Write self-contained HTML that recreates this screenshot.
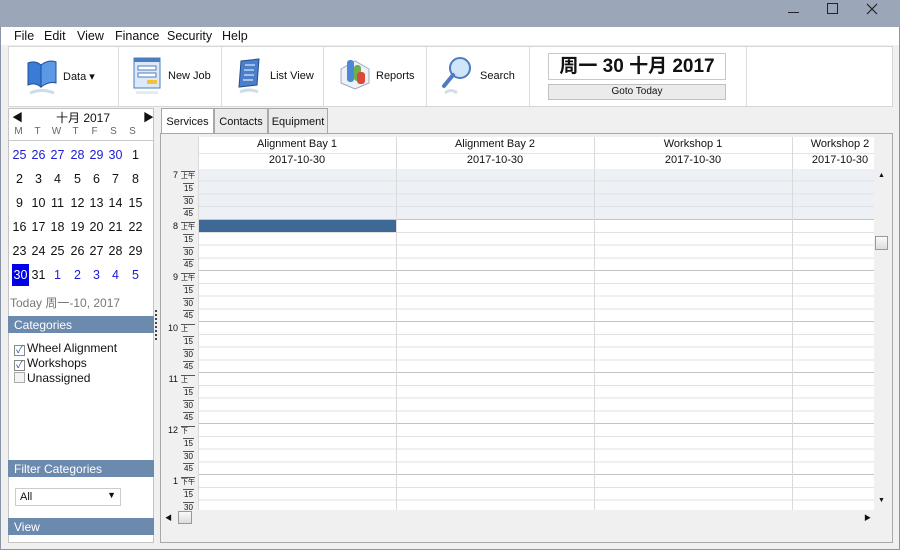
<!DOCTYPE html>
<html><head><meta charset="utf-8"><style>
*{margin:0;padding:0;box-sizing:border-box}
body{width:900px;height:550px;overflow:hidden;background:#f0f0f0;font-family:"Liberation Sans","Noto Sans CJK SC",sans-serif;font-size:12px;color:#111;position:relative}
.a{position:absolute}
#title{left:0;top:0;width:900px;height:27px;background:#9ba6b9}
#frame{left:0;top:27px;width:900px;height:523px;border:1px solid #8a94a6;border-top:none;background:#f0f0f0}
#menu{left:1px;top:27px;width:898px;height:18px;background:#fff}
#menu span{position:absolute;top:2px;font-size:12.5px}
#tb{left:8px;top:46px;width:885px;height:61px;background:#fff;border:1px solid #d6d6d6}
.sep{top:0;width:1px;height:59px;background:#dcdcdc}
.tl{font-size:11px;top:23px}
.hd{background:#6b8aae;color:#fff;font-size:12px;padding:2px 6px;height:17px}
.cal span{position:absolute;width:19px;text-align:center;font-size:12.5px}
.b{color:#1c1cd6}
.tab{top:108px;height:26px;border:1px solid #a8a8a8;border-bottom:none;background:#ebebeb;font-size:11px;text-align:center;line-height:26px}
.ml{left:183px;font-size:8px;border-top:1px solid #555;width:11px;text-align:center;line-height:9px}
.hl{left:168px;font-size:9px;width:10px;text-align:right}
.am{left:181px;font-size:7px;border-top:1px solid #555;width:14px;line-height:9px}
.cb{display:inline-block;width:11px;height:11px;border:1px solid #888;background:#fff;vertical-align:-1px;margin-right:2px;font-size:10px;line-height:9px;text-align:center;color:#2a4f9a}
</style></head><body>
<div class="a" id="title"></div>
<div class="a" style="left:788px;top:12px;width:11px;height:1px;background:#222"></div>
<div class="a" style="left:827px;top:3px;width:11px;height:11px;border:1px solid #222"></div>
<svg class="a" style="left:866px;top:3px" width="12" height="12"><path d="M1 1L11 11M11 1L1 11" stroke="#222" stroke-width="1.2"/></svg>
<div class="a" id="frame"></div>
<div class="a" id="menu">
<span style="left:13px">File</span><span style="left:43px">Edit</span><span style="left:76px">View</span><span style="left:114px">Finance</span><span style="left:166px">Security</span><span style="left:221px">Help</span></div>
<div class="a" id="tb">
<div class="a sep" style="left:109px"></div><div class="a sep" style="left:212px"></div><div class="a sep" style="left:314px"></div><div class="a sep" style="left:417px"></div><div class="a sep" style="left:520px"></div><div class="a sep" style="left:737px"></div>
<svg class="a" style="left:16px;top:10px" width="34" height="40"><path d="M3 6 Q10 3 16 8 L16 30 Q10 25 3 28Z" fill="#3a7bd5" stroke="#1e4f99"/><path d="M16 8 Q24 2 31 5 L31 26 Q24 24 16 30Z" fill="#5b98e6" stroke="#1e4f99"/><path d="M5 36 Q17 31 29 36" stroke="#cfdbe8" stroke-width="3" fill="none"/></svg>
<div class="a tl" style="left:54px">Data ▾</div>
<svg class="a" style="left:124px;top:10px" width="28" height="40"><rect x="1" y="1" width="26" height="30" fill="#dbe9f8" stroke="#4d7cc0"/><rect x="1" y="1" width="26" height="4" fill="#4d7cc0"/><rect x="5" y="9" width="18" height="4" fill="#fff" stroke="#4d7cc0"/><rect x="5" y="16" width="18" height="4" fill="#fff" stroke="#4d7cc0"/><rect x="14" y="23" width="10" height="4" fill="#f3c13a"/><rect x="3" y="34" width="22" height="3" fill="#e3ebf5"/></svg>
<div class="a tl" style="left:159px">New Job</div>
<svg class="a" style="left:226px;top:10px" width="28" height="40"><path d="M6 4 L24 2 L22 28 L4 30Z" fill="#4a7fcc" stroke="#234f8f"/><path d="M10 8h10M9 13h10M9 18h10M8 23h10" stroke="#fff"/><path d="M5 35 Q14 31 23 35" stroke="#cfdbe8" stroke-width="3" fill="none"/></svg>
<div class="a tl" style="left:261px">List View</div>
<svg class="a" style="left:330px;top:8px" width="32" height="42"><path d="M2 14 L16 6 L30 14 L30 28 L16 34 L2 28Z" fill="#eef2f8" stroke="#9aaac0"/><rect x="8" y="5" width="7" height="22" rx="3" fill="#4d88d8"/><rect x="15" y="10" width="7" height="16" rx="3" fill="#6ab04c"/><rect x="18" y="17" width="8" height="12" rx="3" fill="#d94a3a"/></svg>
<div class="a tl" style="left:367px">Reports</div>
<svg class="a" style="left:432px;top:8px" width="32" height="42"><circle cx="19" cy="13" r="10" fill="#cfe5f8" stroke="#4d7cc0" stroke-width="2"/><path d="M12 20 L3 31" stroke="#4d7cc0" stroke-width="4" stroke-linecap="round"/><path d="M4 38 Q10 33 16 38" stroke="#d5dde8" stroke-width="3" fill="none"/></svg>
<div class="a tl" style="left:471px">Search</div>
<div class="a" style="left:539px;top:6px;width:178px;height:27px;border:1px solid #c8c8c8;font-size:19px;font-weight:bold;text-align:center;line-height:25px">周一 30 十月 2017</div>
<div class="a" style="left:539px;top:37px;width:178px;height:16px;border:1px solid #c0c0c0;background:#ebebeb;font-size:10px;text-align:center;line-height:14px">Goto Today</div>
</div>
<!-- left panel -->
<div class="a" style="left:8px;top:108px;width:146px;height:435px;background:#fff;border:1px solid #c4c4c4"></div>
<div class="a" style="left:12px;top:109px;font-size:11px">◀</div>
<div class="a" style="left:143px;top:109px;font-size:11px">▶</div>
<div class="a" style="left:56px;top:109px;font-size:12px">十月 2017</div>
<div class="a cal" style="left:8px;top:126px;width:146px;height:14px;color:#666">
<span style="left:1px;font-size:10px">M</span><span style="left:20px;font-size:10px">T</span><span style="left:39px;font-size:10px">W</span><span style="left:58px;font-size:10px">T</span><span style="left:77px;font-size:10px">F</span><span style="left:96px;font-size:10px">S</span><span style="left:115px;font-size:10px">S</span></div>
<div class="a" style="left:9px;top:140px;width:144px;height:1px;background:#c8c8c8"></div>
<div class="a cal" style="left:10px;top:148px;width:144px">
<span class="b" style="left:0;top:0">25</span><span class="b" style="left:19px;top:0">26</span><span class="b" style="left:38px;top:0">27</span><span class="b" style="left:58px;top:0">28</span><span class="b" style="left:77px;top:0">29</span><span class="b" style="left:96px;top:0">30</span><span style="left:116px;top:0">1</span>
<span style="left:0;top:24px">2</span><span style="left:19px;top:24px">3</span><span style="left:38px;top:24px">4</span><span style="left:58px;top:24px">5</span><span style="left:77px;top:24px">6</span><span style="left:96px;top:24px">7</span><span style="left:116px;top:24px">8</span>
<span style="left:0;top:48px">9</span><span style="left:19px;top:48px">10</span><span style="left:38px;top:48px">11</span><span style="left:58px;top:48px">12</span><span style="left:77px;top:48px">13</span><span style="left:96px;top:48px">14</span><span style="left:116px;top:48px">15</span>
<span style="left:0;top:72px">16</span><span style="left:19px;top:72px">17</span><span style="left:38px;top:72px">18</span><span style="left:58px;top:72px">19</span><span style="left:77px;top:72px">20</span><span style="left:96px;top:72px">21</span><span style="left:116px;top:72px">22</span>
<span style="left:0;top:96px">23</span><span style="left:19px;top:96px">24</span><span style="left:38px;top:96px">25</span><span style="left:58px;top:96px">26</span><span style="left:77px;top:96px">27</span><span style="left:96px;top:96px">28</span><span style="left:116px;top:96px">29</span>
<span style="left:2px;top:116px;width:17px;height:22px;background:#0000e6;color:#fff;line-height:22px">30</span><span style="left:19px;top:120px">31</span><span class="b" style="left:38px;top:120px">1</span><span class="b" style="left:58px;top:120px">2</span><span class="b" style="left:77px;top:120px">3</span><span class="b" style="left:96px;top:120px">4</span><span class="b" style="left:116px;top:120px">5</span></div>
<div class="a" style="left:10px;top:294px;font-size:12px;color:#777">Today 周一-10, 2017</div>
<div class="a hd" style="left:8px;top:316px;width:146px">Categories</div>
<div class="a" style="left:14px;top:341px;font-size:12px;line-height:15px">
<div><span class="cb">✓</span>Wheel Alignment</div><div><span class="cb">✓</span>Workshops</div><div><span class="cb" style="background:#f4f4f4;border-color:#aaa"></span>Unassigned</div></div>
<div class="a hd" style="left:8px;top:460px;width:146px">Filter Categories</div>
<div class="a" style="left:15px;top:488px;width:106px;height:18px;border:1px solid #ccc;background:#fff;font-size:11px;padding:2px 4px">All<span style="position:absolute;right:4px;top:1px;font-size:9px">▼</span></div>
<div class="a hd" style="left:8px;top:518px;width:146px">View</div>
<div class="a" style="left:155px;top:310px;width:2px;height:30px;border-left:2px dotted #444"></div>
<!-- tabs -->
<div class="a tab" style="left:161px;width:53px;background:#fff">Services</div>
<div class="a tab" style="left:214px;width:54px">Contacts</div>
<div class="a tab" style="left:268px;width:60px">Equipment</div>
<div class="a" style="left:160px;top:133px;width:733px;height:410px;border:1px solid #a8a8a8;background:#f0f0f0"></div>
<!-- headers -->
<div class="a" style="left:198px;top:137px;width:676px;height:32px;background:#fff"></div>
<div class="a" style="left:198px;top:153px;width:676px;height:1px;background:#e4e4e4"></div>
<div class="a" style="left:198px;top:138px;width:198px;text-align:center;font-size:11px">Alignment Bay 1</div>
<div class="a" style="left:396px;top:138px;width:198px;text-align:center;font-size:11px">Alignment Bay 2</div>
<div class="a" style="left:594px;top:138px;width:198px;text-align:center;font-size:11px">Workshop 1</div>
<div class="a" style="left:792px;top:138px;width:96px;text-align:center;font-size:11px">Workshop 2</div>
<div class="a" style="left:198px;top:154px;width:198px;text-align:center;font-size:11px">2017-10-30</div>
<div class="a" style="left:396px;top:154px;width:198px;text-align:center;font-size:11px">2017-10-30</div>
<div class="a" style="left:594px;top:154px;width:198px;text-align:center;font-size:11px">2017-10-30</div>
<div class="a" style="left:792px;top:154px;width:96px;text-align:center;font-size:11px">2017-10-30</div>
<!-- grid -->
<div class="a" style="left:198px;top:169px;width:676px;height:341px;background:repeating-linear-gradient(to bottom,transparent 0,transparent 50px,#c4c4c4 50px,#c4c4c4 51px),repeating-linear-gradient(to bottom,transparent 0,transparent 11.75px,#e2e2e2 11.75px,#e2e2e2 12.75px),#fff"></div>
<div class="a" style="left:198px;top:169px;width:676px;height:50px;background:repeating-linear-gradient(to bottom,#edf1f6 0,#edf1f6 11.75px,#dfe3ea 11.75px,#dfe3ea 12.75px)"></div>
<div class="a" style="left:198px;top:220px;width:198px;height:12px;background:#3e6896"></div>
<div class="a" style="left:396px;top:137px;width:1px;height:373px;background:#dadada"></div>
<div class="a" style="left:594px;top:137px;width:1px;height:373px;background:#dadada"></div>
<div class="a" style="left:792px;top:137px;width:1px;height:373px;background:#dadada"></div>
<div class="a" style="left:198px;top:137px;width:1px;height:373px;background:#dadada"></div>
<!-- time labels -->
<div class="a hl" style="top:170px">7</div><div class="a am" style="top:171px">上午</div><div class="a ml" style="top:183px">15</div><div class="a ml" style="top:196px">30</div><div class="a ml" style="top:208px">45</div>
<div class="a hl" style="top:221px">8</div><div class="a am" style="top:222px">上午</div><div class="a ml" style="top:234px">15</div><div class="a ml" style="top:247px">30</div><div class="a ml" style="top:259px">45</div>
<div class="a hl" style="top:272px">9</div><div class="a am" style="top:273px">上午</div><div class="a ml" style="top:285px">15</div><div class="a ml" style="top:298px">30</div><div class="a ml" style="top:310px">45</div>
<div class="a hl" style="top:323px;left:166px;width:12px">10</div><div class="a am" style="top:324px">上</div><div class="a ml" style="top:336px">15</div><div class="a ml" style="top:349px">30</div><div class="a ml" style="top:361px">45</div>
<div class="a hl" style="top:374px;left:166px;width:12px">11</div><div class="a am" style="top:375px">上</div><div class="a ml" style="top:387px">15</div><div class="a ml" style="top:400px">30</div><div class="a ml" style="top:412px">45</div>
<div class="a hl" style="top:425px;left:166px;width:12px">12</div><div class="a am" style="top:426px">下</div><div class="a ml" style="top:438px">15</div><div class="a ml" style="top:451px">30</div><div class="a ml" style="top:463px">45</div>
<div class="a hl" style="top:476px">1</div><div class="a am" style="top:477px">下午</div><div class="a ml" style="top:489px">15</div><div class="a ml" style="top:502px;height:8px;overflow:hidden">30</div>
<!-- scrollbars -->
<div class="a" style="left:874px;top:169px;width:16px;height:341px;background:#f0f0f0"></div>
<div class="a" style="left:878px;top:172px;font-size:7px">▲</div>
<div class="a" style="left:875px;top:236px;width:13px;height:14px;border:1px solid #999;background:linear-gradient(#fafafa,#dcdcdc)"></div>
<div class="a" style="left:878px;top:497px;font-size:7px">▼</div>
<div class="a" style="left:162px;top:510px;width:712px;height:15px;background:#f0f0f0"></div>
<div class="a" style="left:165px;top:513px;font-size:7px">◀</div>
<div class="a" style="left:178px;top:511px;width:14px;height:13px;border:1px solid #999;background:linear-gradient(#fafafa,#dcdcdc)"></div>
<div class="a" style="left:864px;top:513px;font-size:7px">▶</div>
</body></html>
